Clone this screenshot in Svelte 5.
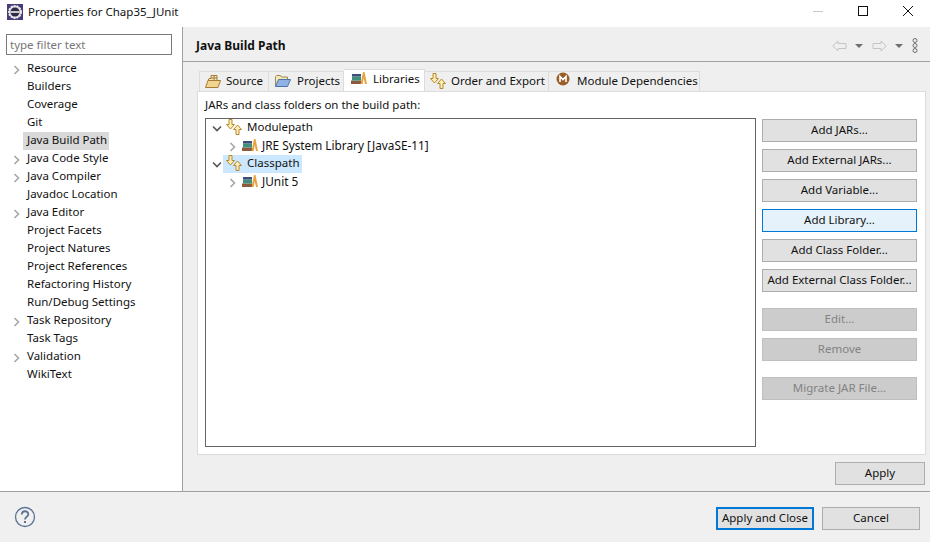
<script lang="ts">
	const pages = [
		{ name: 'Resource', arrow: true },
		{ name: 'Builders' },
		{ name: 'Coverage' },
		{ name: 'Git' },
		{ name: 'Java Build Path', selected: true },
		{ name: 'Java Code Style', arrow: true },
		{ name: 'Java Compiler', arrow: true },
		{ name: 'Javadoc Location' },
		{ name: 'Java Editor', arrow: true },
		{ name: 'Project Facets' },
		{ name: 'Project Natures' },
		{ name: 'Project References' },
		{ name: 'Refactoring History' },
		{ name: 'Run/Debug Settings' },
		{ name: 'Task Repository', arrow: true },
		{ name: 'Task Tags' },
		{ name: 'Validation', arrow: true },
		{ name: 'WikiText' }
	];

	const groups = [
		{ name: 'Modulepath', child: 'JRE System Library [JavaSE-11]' },
		{ name: 'Classpath', child: 'JUnit 5', selected: true }
	];

	const buttons = [
		{ label: 'Add JARs...' },
		{ label: 'Add External JARs...' },
		{ label: 'Add Variable...' },
		{ label: 'Add Library...', hover: true },
		{ label: 'Add Class Folder...' },
		{ label: 'Add External Class Folder...' },
		{ label: 'Edit...', disabled: true, gap: true },
		{ label: 'Remove', disabled: true },
		{ label: 'Migrate JAR File...', disabled: true, gap: true }
	];
</script>

{#snippet chevronRight()}
	<svg class="chev" width="8" height="10" viewBox="0 0 8 10"><path d="M1.5 1l4 4-4 4" fill="none" stroke="#a6a6a6" stroke-width="1.6"/></svg>
{/snippet}

{#snippet chevronDown()}
	<svg class="chev" width="10" height="8" viewBox="0 0 10 8"><path d="M1 1.5l4 4 4-4" fill="none" stroke="#555" stroke-width="1.6"/></svg>
{/snippet}

{#snippet orderIcon()}
	<svg class="ico" width="18" height="16" viewBox="0 0 18 16">
		<path d="M3 .5h3v5h2.500L4.500 10 .5 5.500H3z" fill="#fdeeb8" stroke="#b58a2c"/>
		<path d="M12 15.500H9v-5H6.500l4-4.500 4 4.500H12z" transform="translate(1 0)" fill="#fdeeb8" stroke="#b58a2c"/>
	</svg>
{/snippet}

{#snippet libIcon()}
	<svg class="ico" width="16" height="12" viewBox="0 0 16 12">
		<rect x="0" y="8.500" width="10" height="3.500" fill="#8c5a3c"/>
		<rect x="1" y="4.500" width="9" height="4" fill="#3f8f7c"/>
		<rect x="1" y="2" width="9" height="2.500" fill="#3d4f78"/>
		<path d="M9.500 12l2.500-12h1.500l2.500 12h-2l-1.300-6-1 6z" fill="#e8a33d"/>
	</svg>
{/snippet}

<div class="window">
	<header class="titlebar">
		<svg class="app-icon" width="16" height="16" viewBox="0 0 16 16">
			<rect width="16" height="16" fill="#4b3b78"/>
			<circle cx="8" cy="8" r="6.200" fill="#d8d8e0" stroke="#f2f2f2" stroke-width="1.500" stroke-dasharray="2 1"/>
			<circle cx="8" cy="8" r="4.500" fill="#2f2a45"/>
			<rect x="3.500" y="7.200" width="9" height="1.600" fill="#f0f0f0"/>
		</svg>
		<span class="title">Properties for Chap35_JUnit</span>
		<div class="win-controls">
			<svg width="10" height="10" viewBox="0 0 10 10"><path d="M0 5.500h10" stroke="#c8c8c8"/></svg>
			<svg width="10" height="10" viewBox="0 0 10 10"><rect x=".5" y=".5" width="9" height="9" fill="none" stroke="#111"/></svg>
			<svg width="10" height="10" viewBox="0 0 10 10"><path d="M0 0l10 10M10 0L0 10" stroke="#111"/></svg>
		</div>
	</header>

	<div class="main">
		<aside class="sidebar">
			<input class="filter" placeholder="type filter text" />
			<ul class="pages">
				{#each pages as page}
					<li class="page">
						<span class="arrow">{#if page.arrow}{@render chevronRight()}{/if}</span>
						<span class="page-name" class:selected={page.selected}>{page.name}</span>
					</li>
				{/each}
			</ul>
		</aside>

		<section class="content">
			<div class="content-head">
				<h1>Java Build Path</h1>
				<div class="nav-icons">
					<svg width="15" height="12" viewBox="0 0 15 12"><path d="M.8 6L6 1v2.500h8v5H6V11z" fill="none" stroke="#c4c4c4"/></svg>
					<svg class="caret" width="8" height="4" viewBox="0 0 8 4"><path d="M0 0h8L4 4z" fill="#6e6e6e"/></svg>
					<svg width="15" height="12" viewBox="0 0 15 12"><path d="M14.200 6L9 1v2.500H1v5h8V11z" fill="none" stroke="#c4c4c4"/></svg>
					<svg class="caret" width="8" height="4" viewBox="0 0 8 4"><path d="M0 0h8L4 4z" fill="#6e6e6e"/></svg>
					<svg class="dots" width="6" height="15" viewBox="0 0 6 15"><g fill="none" stroke="#6e6e6e"><circle cx="3" cy="2.500" r="2"/><circle cx="3" cy="7.500" r="2"/><circle cx="3" cy="12.500" r="2"/></g></svg>
				</div>
			</div>

			<div class="tabs">
				<div class="tab source">
					<svg class="ico" width="16" height="14" viewBox="0 0 16 14">
						<path d="M3 6.500l1-2h2V1.500h6v5" fill="#f7e8bf" stroke="#a57b35"/>
						<path d="M9 1.500v5M6 4h6" stroke="#a57b35"/>
						<path d="M.5 13.500l2.500-7h12.500l-2.500 7z" fill="#f0d48f" stroke="#a57b35"/>
					</svg>
					Source
				</div>
				<div class="tab projects">
					<svg class="ico" width="16" height="14" viewBox="0 0 16 14">
						<path d="M.5 12.500v-10l1-1h4l1 1.500h6v2" fill="#f7e7b5" stroke="#9a8a5a"/>
						<path d="M.5 12.500l3-7h12l-3 7z" fill="#8fb4e3" stroke="#4d73a8"/>
					</svg>
					Projects
				</div>
				<div class="tab active">{@render libIcon()} Libraries</div>
				<div class="tab order">{@render orderIcon()} Order and Export</div>
				<div class="tab module">
					<svg class="ico module-icon" width="14" height="14" viewBox="0 0 14 14">
						<circle cx="7" cy="7" r="6.500" fill="#9a5f28"/>
						<path d="M4 10V4.500l3 3 3-3V10" fill="none" stroke="#fff" stroke-width="1.600"/>
					</svg>
					Module Dependencies
				</div>
			</div>

			<div class="panel">
				<p class="panel-label">JARs and class folders on the build path:</p>
				<div class="panel-body">
					<div class="tree">
						{#each groups as group}
							<div class="row">
								<span class="twist">{@render chevronDown()}</span>
								<span class="row-label" class:selected={group.selected}>{@render orderIcon()}<span class="row-text">{group.name}</span></span>
							</div>
							<div class="row child">
								<span class="twist">{@render chevronRight()}</span>
								<span class="row-label">{@render libIcon()}<span class="row-text">{group.child}</span></span>
							</div>
						{/each}
					</div>
					<div class="actions">
						{#each buttons as b}
							<button class="btn" class:hover={b.hover} class:gap={b.gap} disabled={b.disabled}>{b.label}</button>
						{/each}
					</div>
				</div>
			</div>

			<div class="apply-row">
				<button class="btn apply">Apply</button>
			</div>
		</section>
	</div>

	<footer class="footer">
		<svg width="22" height="22" viewBox="0 0 22 22">
			<circle cx="11" cy="11" r="9.500" fill="none" stroke="#5d7396" stroke-width="1.300"/>
			<path d="M7.800 8.500c0-4.300 6.500-4.300 6.500-.3 0 2.600-3.300 2.500-3.300 5.300" fill="none" stroke="#5d7396" stroke-width="1.800"/>
			<rect x="10" y="15" width="2" height="2" fill="#5d7396"/>
		</svg>
		<div class="footer-actions">
			<button class="btn default">Apply and Close</button>
			<button class="btn">Cancel</button>
		</div>
	</footer>
</div>

<style>
	:global(body) {
		margin: 0;
		background: #fff;
	}

	.window {
		width: 930px;
		height: 542px;
		display: flex;
		flex-direction: column;
		overflow: hidden;
		font-family: "Noto Sans", sans-serif;
		font-size: 11.5px;
		color: #111;
	}

	.titlebar {
		height: 27px;
		flex-shrink: 0;
		display: flex;
		align-items: center;
		padding: 0 0 3px 7px;
		box-sizing: border-box;
		background: #fff;
	}
	.app-icon {
		margin-right: 5px;
	}
	.title {
		padding-bottom: 2px;
	}
	.win-controls {
		margin-left: auto;
		display: flex;
		gap: 35px;
		padding-right: 17px;
		margin-top: -2px;
	}

	.main {
		flex: 1;
		display: flex;
		min-height: 0;
		border-bottom: 1px solid #a0a0a0;
	}

	.sidebar {
		width: 182px;
		flex-shrink: 0;
		border-right: 1px solid #a0a0a0;
		background: #fff;
		padding-top: 7px;
	}
	.filter {
		display: block;
		width: 166px;
		height: 21px;
		box-sizing: border-box;
		margin: 0 0 0 6px;
		padding: 0 3px;
		border: 1px solid #7a7a7a;
		font: inherit;
		outline: none;
	}
	.filter::placeholder {
		color: #777;
		opacity: 1;
	}
	.pages {
		list-style: none;
		margin: 5px 0 0;
		padding: 0;
	}
	.page {
		height: 18px;
		display: flex;
		align-items: center;
	}
	.arrow {
		width: 23px;
		padding-left: 13px;
		box-sizing: border-box;
		display: flex;
		padding-top: 2px;
	}
	.page-name {
		padding: 0 2px 2px 4px;
		line-height: 16px;
	}
	.page-name.selected {
		background: #d9d9d9;
	}

	.content {
		flex: 1;
		min-width: 0;
		background: #efefef;
		display: flex;
		flex-direction: column;
	}
	.content-head {
		height: 35px;
		flex-shrink: 0;
		box-sizing: border-box;
		border-bottom: 1px solid #a0a0a0;
		display: flex;
		align-items: center;
		padding: 3px 12px 0 13px;
	}
	h1 {
		margin: 0;
		font-size: 12px;
		font-weight: 700;
	}
	.nav-icons {
		margin-left: auto;
		display: flex;
		align-items: center;
		gap: 8px;
	}
	.caret {
		margin-right: 1px;
	}

	.tabs {
		display: flex;
		align-items: flex-end;
		height: 29px;
		flex-shrink: 0;
		padding-left: 16px;
	}
	.tab {
		height: 20px;
		box-sizing: border-box;
		display: flex;
		align-items: center;
		border: 1px solid #dcdcdc;
		border-bottom: 0;
		border-left-width: 0;
		padding-bottom: 2px;
		white-space: nowrap;
	}
	.tab.source {
		width: 70px;
		gap: 5px;
		padding-left: 5px;
		border-left-width: 1px;
	}
	.tab.projects {
		width: 75px;
		gap: 6px;
		padding-left: 6px;
	}
	.tab.active {
		width: 81px;
		height: 22px;
		gap: 6px;
		padding: 0 0 5px 7px;
		background: #fff;
	}
	.tab.order {
		width: 124px;
		gap: 3px;
		padding-left: 5px;
	}
	.tab.module {
		width: 151px;
		gap: 7px;
		padding-left: 7px;
	}
	.module-icon {
		margin-top: -3px;
	}

	.panel {
		width: 729px;
		height: 364px;
		margin-left: 14px;
		box-sizing: border-box;
		border: 1px solid #dcdcdc;
		background: #fff;
		padding: 0 7px;
		display: flex;
		flex-direction: column;
	}
	.panel-label {
		margin: 0;
		height: 26px;
		line-height: 26px;
	}
	.panel-body {
		flex: 1;
		display: flex;
		gap: 6px;
		padding-bottom: 7px;
		min-height: 0;
	}
	.tree {
		width: 551px;
		box-sizing: border-box;
		border: 1px solid #646464;
	}
	.row {
		height: 18px;
		display: flex;
		align-items: center;
		padding-left: 6px;
	}
	.row.child {
		padding-left: 23px;
		font-size: 11.8px;
	}
	.twist {
		width: 14px;
		display: flex;
		padding-top: 2px;
	}
	.child .twist {
		width: 13px;
	}
	.row-label {
		display: flex;
		align-items: center;
		gap: 3px;
		height: 18px;
		box-sizing: border-box;
		padding: 0 2px 2px 3px;
		margin-left: -3px;
	}
	.row-text {
		padding-bottom: 2px;
	}
	.child .row-text {
		margin-left: 1px;
		padding-bottom: 0;
	}
	.row-label.selected {
		background: #cce8ff;
	}

	.actions {
		width: 155px;
		display: flex;
		flex-direction: column;
		gap: 7px;
		padding-top: 1px;
	}
	.btn {
		height: 23px;
		padding: 0 0 2px;
		box-sizing: border-box;
		border: 1px solid #adadad;
		background: #e1e1e1;
		font: inherit;
		color: #111;
		white-space: nowrap;
	}
	.btn.gap {
		margin-top: 9px;
	}
	.btn.hover {
		background: #e5f1fb;
		border-color: #0078d7;
	}
	.btn:disabled {
		background: #cccccc;
		border-color: #bfbfbf;
		color: #838383;
	}

	.apply-row {
		display: flex;
		justify-content: flex-end;
		padding: 7px 5px 0 0;
	}
	.apply {
		width: 90px;
	}

	.footer {
		height: 50px;
		flex-shrink: 0;
		background: #f0f0f0;
		display: flex;
		align-items: center;
		padding: 0 10px 0 14px;
	}
	.footer-actions {
		margin-left: auto;
		display: flex;
		gap: 8px;
		margin-top: 2px;
	}
	.footer-actions .btn {
		width: 98px;
	}
	.btn.default {
		border: 2px solid #0078d7;
	}
</style>
